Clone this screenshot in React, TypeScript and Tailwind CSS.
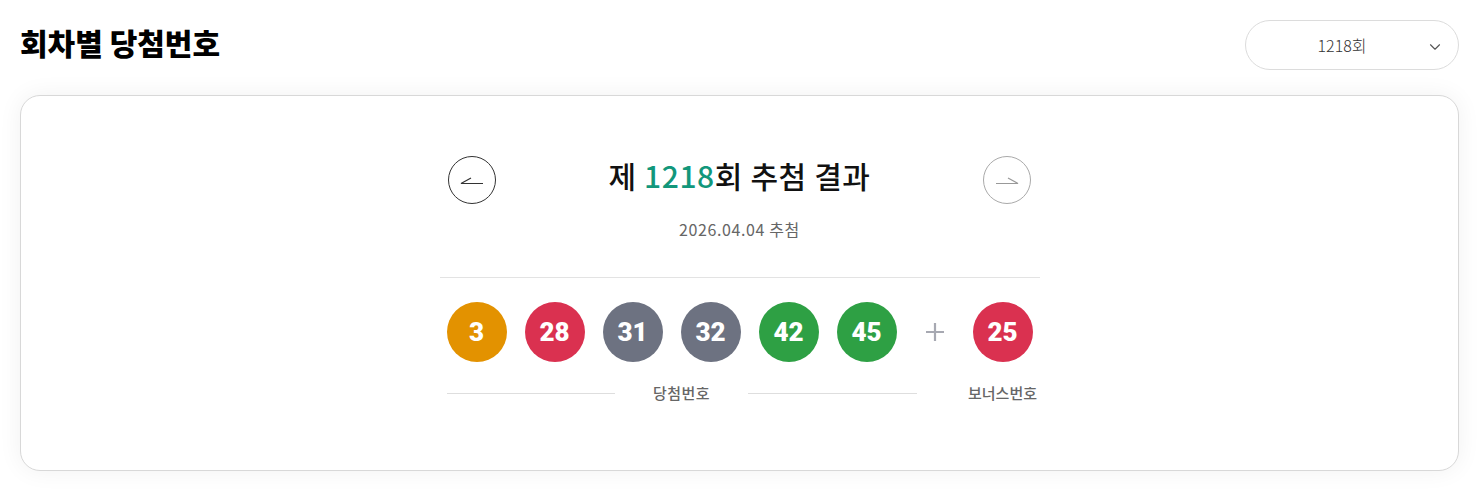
import { ChevronDown } from "lucide-react";

type Ball = { n: number; color: string };

const winning: Ball[] = [
  { n: 3, color: "bg-[#e39200]" },
  { n: 28, color: "bg-[#da3150]" },
  { n: 31, color: "bg-[#6d7281]" },
  { n: 32, color: "bg-[#6d7281]" },
  { n: 42, color: "bg-[#2ea044]" },
  { n: 45, color: "bg-[#2ea044]" },
];

const bonus: Ball = { n: 25, color: "bg-[#da3150]" };

const font = {
  fontFamily: '"Noto Sans CJK KR", "Noto Sans", sans-serif',
};

const LottoBall = ({ ball }: { ball: Ball }) => (
  <div
    className={`flex h-[60px] w-[60px] items-center justify-center rounded-full ${ball.color} text-[26px] font-black text-white`}
    style={{ fontFamily: 'Roboto, "Noto Sans", sans-serif' }}
  >
    {ball.n}
  </div>
);

const ArrowButton = ({ dir }: { dir: "prev" | "next" }) => (
  <button
    className={`flex h-[48px] w-[48px] items-center justify-center rounded-full border ${
      dir === "prev" ? "border-[#333]" : "border-[#aaa]"
    } bg-white`}
  >
    <svg width="26" height="12" viewBox="0 0 26 12" fill="none">
      {dir === "prev" ? (
        <path d="M24 9.5H2L12 4" stroke="#333" strokeWidth="1.2" />
      ) : (
        <path d="M2 9.5H24L14 4" stroke="#999" strokeWidth="1.2" />
      )}
    </svg>
  </button>
);

export default function App() {
  return (
    <div className="min-h-screen bg-white pl-5 pr-[22px] pt-5" style={font}>
      <div className="flex items-center justify-between">
        <h1 className="mb-[6px] text-[30px] font-black leading-[40px] text-black">
          회차별 당첨번호
        </h1>
        <button className="relative flex h-[50px] w-[214px] items-center rounded-full border border-[#dcdcdc] bg-white">
          <span className="w-full pr-[20px] text-center text-[16px] font-light text-[#333]">
            1218회
          </span>
          <ChevronDown
            className="absolute right-[14px] top-[17px] text-[#555]"
            size={18}
            strokeWidth={1.5}
          />
        </button>
      </div>

      <div className="mt-[25px] h-[376px] rounded-[20px] border border-[#d8d8d8] bg-white pt-[60px] shadow-[0_0_24px_rgba(0,0,0,0.06)]">
        <div className="mx-auto w-[600px]">
          <div className="flex items-start justify-between px-2">
            <ArrowButton dir="prev" />
            <h2 className="text-[30px] font-medium leading-[38px] tracking-[0.6px] text-[#111]">
              제 <span className="text-[#12977b]">1218</span>회 추첨 결과
            </h2>
            <ArrowButton dir="next" />
          </div>
          <p className="mt-[14px] text-center text-[16px] leading-[22px] tracking-[0.6px] text-[#666]">
            2026.04.04 추첨
          </p>

          <div className="mt-[37px] h-px bg-[#e3e3e3]" />

          <div className="mt-[24px] flex items-center justify-center gap-[18px]">
            {winning.map((b) => (
              <LottoBall key={b.n} ball={b} />
            ))}
            <svg width="40" height="40" viewBox="0 0 40 40">
              <path
                d="M20 11V29M11 20H29"
                stroke="#a7a9b2"
                strokeWidth="2.2"
              />
            </svg>
            <LottoBall ball={bonus} />
          </div>

          <div className="mt-[21px] flex items-center pl-[7px]">
            <div className="flex w-[470px] items-center">
              <div className="h-px flex-1 bg-[#dedede]" />
              <span className="px-[38px] text-[15px] font-medium leading-[20px] tracking-[0.5px] text-[#666]">
                당첨번호
              </span>
              <div className="h-px flex-1 bg-[#dedede]" />
            </div>
            <div className="ml-[56px] flex w-[60px] justify-center whitespace-nowrap text-[15px] font-medium leading-[20px] text-[#666]">
              보너스번호
            </div>
          </div>
        </div>
      </div>
    </div>
  );
}
